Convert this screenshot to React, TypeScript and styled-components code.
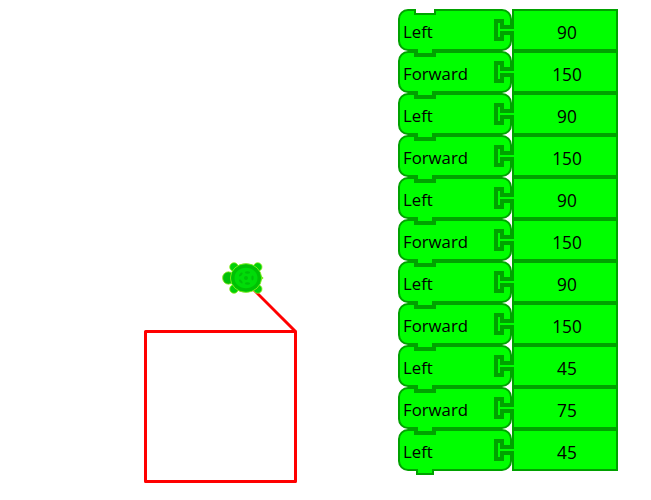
import React from "react";
import styled, { createGlobalStyle } from "styled-components";

const GREEN = "#00ff00";
const EDGE = "#00a200";

const GlobalStyle = createGlobalStyle`
  body { margin: 0; background: #fff; }
`;

const Page = styled.main`
  display: flex;
  width: 651px;
  height: 500px;
  overflow: hidden;
  background: #fff;
  font-family: "Open Sans", "Noto Sans", sans-serif;
`;

const Stage = styled.section`
  flex: 0 0 398px;
  height: 500px;
`;

const Drawing = styled.svg`
  display: block;
`;

const Program = styled.section`
  display: flex;
  flex-direction: column;
  padding-top: 9px;
`;

const Row = styled.div`
  display: flex;
  height: 42px;
`;

const Command = styled.div`
  position: relative;
  box-sizing: border-box;
  width: 114px;
  height: 42px;
  border: 2px solid ${EDGE};
  border-radius: 10px;
  background: ${GREEN};
`;

const Label = styled.span`
  display: block;
  padding-left: 3px;
  font-size: 16.8px;
  line-height: 42px;
  color: #000;
`;

const Notch = styled.i`
  position: absolute;
  left: 14px;
  top: -2px;
  box-sizing: border-box;
  width: 22px;
  height: 6px;
  border: solid ${EDGE};
  border-width: 0 2px 2px;
  background: #fff;
`;

const Tab = styled.i`
  position: absolute;
  z-index: 1;
  left: 16px;
  bottom: -6px;
  box-sizing: border-box;
  width: 18px;
  height: 6px;
  border: solid ${EDGE};
  border-width: 0 2px 2px;
  background: ${GREEN};
`;

const Plug = styled.svg`
  position: absolute;
  z-index: 1;
  left: 94px;
  top: 8px;
`;

const Value = styled.div`
  box-sizing: border-box;
  width: 106px;
  height: 42px;
  padding-left: 4px;
  border: 2px solid ${EDGE};
  background: ${GREEN};
  font-size: 17.3px;
  line-height: 43px;
  text-align: center;
  color: #000;
`;

const steps: [string, number][] = [
  ["Left", 90],
  ["Forward", 150],
  ["Left", 90],
  ["Forward", 150],
  ["Left", 90],
  ["Forward", 150],
  ["Left", 90],
  ["Forward", 150],
  ["Left", 45],
  ["Forward", 75],
  ["Left", 45],
];

function Turtle() {
  return (
    <g>
      <g fill="#00d008" stroke="#90ec20" strokeWidth="0.8">
        <ellipse cx="228.4" cy="278" rx="5.8" ry="6.2" fill="#00c008" />
        <circle cx="234" cy="267" r="4.3" />
        <circle cx="257.7" cy="267" r="4.3" />
        <circle cx="234" cy="289" r="4.3" />
        <circle cx="257.7" cy="289" r="4.3" />
        <path d="M259 274 L263.2 278 L259 282 Z" />
        <ellipse cx="246" cy="278" rx="15.6" ry="14.4" />
      </g>
      <ellipse cx="246" cy="278" rx="13" ry="11.8" fill="#00dc08" stroke="#00c004" strokeWidth="3" />
      <g fill="#00c008">
        <circle cx="246" cy="278" r="2" />
        <ellipse cx="247.5" cy="272.5" rx="2.6" ry="1.2" />
        <ellipse cx="247.5" cy="283.5" rx="2.6" ry="1.2" />
        <ellipse cx="240.8" cy="274.5" rx="2.3" ry="1.2" transform="rotate(-45 240.8 274.5)" />
        <ellipse cx="240.8" cy="281.5" rx="2.3" ry="1.2" transform="rotate(45 240.8 281.5)" />
        <ellipse cx="252.5" cy="278" rx="1.2" ry="2.4" />
      </g>
    </g>
  );
}

export default function App() {
  return (
    <>
      <GlobalStyle />
      <Page>
        <Stage>
          <Drawing width="398" height="500" viewBox="0 0 398 500">
            <g fill="none" stroke="#ff0000" strokeWidth="3">
              <rect x="145.5" y="331.5" width="150" height="150" strokeLinejoin="round" />
              <path d="M295.5 331.5 L242.5 278.5" />
            </g>
            <Turtle />
          </Drawing>
        </Stage>
        <Program>
          {steps.map(([name, amount], i) => (
            <Row key={i}>
              <Command>
                <Notch />
                <Tab />
                <Label>{name}</Label>
                <Plug width="20" height="22" viewBox="0 0 20 22" shapeRendering="crispEdges">
                  <path d="M0 0H10V6H20V16H10V22H0Z" fill={EDGE} />
                  <path d="M4 4H6V10H20V12H6V18H4Z" fill={GREEN} />
                </Plug>
              </Command>
              <Value>{amount}</Value>
            </Row>
          ))}
        </Program>
      </Page>
    </>
  );
}
